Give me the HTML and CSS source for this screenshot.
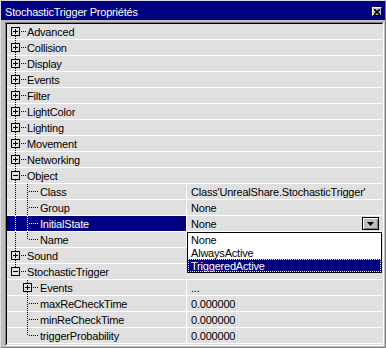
FILE: index.html
```html
<!DOCTYPE html>
<html lang="fr">
<head>
    <meta charset="UTF-8">
    <meta name="viewport" content="width=device-width, initial-scale=1.0">
    <title>StochasticTrigger Propriétés</title>
    <link rel="stylesheet" href="styles.css">
</head>
<body>
    <div class="window">
        <div class="titlebar">
            <span class="caption">StochasticTrigger Propriétés</span>
            <span class="close">
                <svg width="6" height="6" viewBox="0 0 6 6"><path d="M0 0L6 6M6 0L0 6" stroke="#000" stroke-width="1.6"/></svg>
            </span>
        </div>

        <div class="frame">
            <div class="rows">
                <!-- categories -->
                <div class="row">
                    <svg class="tree" width="20" height="16"><path class="dot" d="M8.5 12V16M14 7.5H19"/><rect class="box" x="4.5" y="3.5" width="8" height="8"/><path class="sign" d="M6 7.5H11M8.5 5V10"/></svg>
                    <span class="label">Advanced</span>
                </div>
                <div class="row">
                    <svg class="tree" width="20" height="16"><path class="dot" d="M8.5 0V3M8.5 12V16M14 7.5H19"/><rect class="box" x="4.5" y="3.5" width="8" height="8"/><path class="sign" d="M6 7.5H11M8.5 5V10"/></svg>
                    <span class="label">Collision</span>
                </div>
                <div class="row">
                    <svg class="tree" width="20" height="16"><path class="dot" d="M8.5 0V3M8.5 12V16M14 7.5H19"/><rect class="box" x="4.5" y="3.5" width="8" height="8"/><path class="sign" d="M6 7.5H11M8.5 5V10"/></svg>
                    <span class="label">Display</span>
                </div>
                <div class="row">
                    <svg class="tree" width="20" height="16"><path class="dot" d="M8.5 0V3M8.5 12V16M14 7.5H19"/><rect class="box" x="4.5" y="3.5" width="8" height="8"/><path class="sign" d="M6 7.5H11M8.5 5V10"/></svg>
                    <span class="label">Events</span>
                </div>
                <div class="row">
                    <svg class="tree" width="20" height="16"><path class="dot" d="M8.5 0V3M8.5 12V16M14 7.5H19"/><rect class="box" x="4.5" y="3.5" width="8" height="8"/><path class="sign" d="M6 7.5H11M8.5 5V10"/></svg>
                    <span class="label">Filter</span>
                </div>
                <div class="row">
                    <svg class="tree" width="20" height="16"><path class="dot" d="M8.5 0V3M8.5 12V16M14 7.5H19"/><rect class="box" x="4.5" y="3.5" width="8" height="8"/><path class="sign" d="M6 7.5H11M8.5 5V10"/></svg>
                    <span class="label">LightColor</span>
                </div>
                <div class="row">
                    <svg class="tree" width="20" height="16"><path class="dot" d="M8.5 0V3M8.5 12V16M14 7.5H19"/><rect class="box" x="4.5" y="3.5" width="8" height="8"/><path class="sign" d="M6 7.5H11M8.5 5V10"/></svg>
                    <span class="label">Lighting</span>
                </div>
                <div class="row">
                    <svg class="tree" width="20" height="16"><path class="dot" d="M8.5 0V3M8.5 12V16M14 7.5H19"/><rect class="box" x="4.5" y="3.5" width="8" height="8"/><path class="sign" d="M6 7.5H11M8.5 5V10"/></svg>
                    <span class="label">Movement</span>
                </div>
                <div class="row">
                    <svg class="tree" width="20" height="16"><path class="dot" d="M8.5 0V3M8.5 12V16M14 7.5H19"/><rect class="box" x="4.5" y="3.5" width="8" height="8"/><path class="sign" d="M6 7.5H11M8.5 5V10"/></svg>
                    <span class="label">Networking</span>
                </div>
                <div class="row">
                    <svg class="tree" width="20" height="16"><path class="dot" d="M8.5 0V3M8.5 12V16M14 7.5H19"/><rect class="box" x="4.5" y="3.5" width="8" height="8"/><path class="sign" d="M6 7.5H11"/></svg>
                    <span class="label">Object</span>
                </div>

                <!-- Object properties -->
                <div class="row">
                    <span class="name">
                        <svg class="tree" width="33" height="16"><path class="dot" d="M8.5 0V16M20.5 0V16M22 7.5H32"/></svg>
                        <span class="label">Class</span>
                    </span>
                    <span class="value">Class'UnrealShare.StochasticTrigger'</span>
                </div>
                <div class="row">
                    <span class="name">
                        <svg class="tree" width="33" height="16"><path class="dot" d="M8.5 0V16M20.5 0V16M22 7.5H32"/></svg>
                        <span class="label">Group</span>
                    </span>
                    <span class="value">None</span>
                </div>
                <div class="row">
                    <span class="name selected">
                        <svg class="tree" width="33" height="16"><path class="dot" d="M8.5 0V16M20.5 0V16M22 7.5H32"/></svg>
                        <span class="label">InitialState</span>
                    </span>
                    <span class="value">
                        None
                        <span class="combo-btn">
                            <svg width="7" height="4" viewBox="0 0 7 4"><path d="M0 0H7L3.5 4Z" fill="#000"/></svg>
                        </span>
                        <div class="dropdown">
                            <div class="option">None</div>
                            <div class="option">AlwaysActive</div>
                            <div class="option active">TriggeredActive</div>
                        </div>
                    </span>
                </div>
                <div class="row">
                    <span class="name">
                        <svg class="tree" width="33" height="16"><path class="dot" d="M8.5 0V16M20.5 0V8M22 7.5H32"/></svg>
                        <span class="label">Name</span>
                    </span>
                    <span class="value"></span>
                </div>

                <div class="row">
                    <svg class="tree" width="20" height="16"><path class="dot" d="M8.5 0V3M8.5 12V16M14 7.5H19"/><rect class="box" x="4.5" y="3.5" width="8" height="8"/><path class="sign" d="M6 7.5H11M8.5 5V10"/></svg>
                    <span class="label">Sound</span>
                </div>
                <div class="row">
                    <svg class="tree" width="20" height="16"><path class="dot" d="M8.5 0V3M14 7.5H19"/><rect class="box" x="4.5" y="3.5" width="8" height="8"/><path class="sign" d="M6 7.5H11"/></svg>
                    <span class="label">StochasticTrigger</span>
                </div>

                <!-- StochasticTrigger properties -->
                <div class="row">
                    <span class="name">
                        <svg class="tree" width="33" height="16"><path class="dot" d="M20.5 0V3M20.5 12V16M26 7.5H32"/><rect class="box" x="16.5" y="3.5" width="8" height="8"/><path class="sign" d="M18 7.5H23M20.5 5V10"/></svg>
                        <span class="label">Events</span>
                    </span>
                    <span class="value">...</span>
                </div>
                <div class="row">
                    <span class="name">
                        <svg class="tree" width="33" height="16"><path class="dot" d="M20.5 0V16M22 7.5H32"/></svg>
                        <span class="label">maxReCheckTime</span>
                    </span>
                    <span class="value">0.000000</span>
                </div>
                <div class="row">
                    <span class="name">
                        <svg class="tree" width="33" height="16"><path class="dot" d="M20.5 0V16M22 7.5H32"/></svg>
                        <span class="label">minReCheckTime</span>
                    </span>
                    <span class="value">0.000000</span>
                </div>
                <div class="row">
                    <span class="name">
                        <svg class="tree" width="33" height="16"><path class="dot" d="M20.5 0V8M22 7.5H32"/></svg>
                        <span class="label">triggerProbability</span>
                    </span>
                    <span class="value">0.000000</span>
                </div>
            </div>
        </div>
    </div>
</body>
</html>
```

FILE: styles.css
```css
body {
    margin: 0;
    font-family: 'Liberation Sans', Arial, sans-serif;
    font-size: 11px;
    letter-spacing: -0.2px;
    color: #000;
    background: #c0c0c0;
}
.window {
    width: 386px;
    height: 348px;
    box-sizing: border-box;
    border: 1px solid;
    border-color: #dfdfdf #808080 #808080 #dfdfdf;
    background: #c0c0c0;
    overflow: hidden;
}
.titlebar {
    height: 19px;
    background: #000080;
    color: #fff;
    display: flex;
    justify-content: space-between;
    align-items: flex-start;
    padding: 0 3px 0 4px;
}
.caption {
    line-height: 15px;
    margin-top: 4px;
    white-space: nowrap;
}
.close {
    width: 10px;
    height: 9px;
    margin-top: 6px;
    box-sizing: border-box;
    background: #c0c0c0;
    border: 1px solid;
    border-color: #fff #000 #000 #fff;
    display: flex;
    align-items: center;
    justify-content: center;
}
.close svg {
    display: block;
}
.frame {
    margin: 2px 1px 1px 4px;
    border: 1px solid;
    border-color: #808080 #fff #fff #808080;
}
.rows {
    border: 1px solid;
    border-color: #000 #dfdfdf #dfdfdf #000;
    height: 320px;
    overflow: visible;
}
.row {
    display: flex;
    height: 15px;
    line-height: 16px;
    background: #e0e0e0;
    border-bottom: 1px solid #fff;
    white-space: nowrap;
}
.tree {
    display: block;
    flex-shrink: 0;
    height: 16px;
    color: #000;
    shape-rendering: crispEdges;
}
.tree .dot {
    fill: none;
    stroke: currentColor;
    stroke-dasharray: 1 1;
}
.tree .box {
    fill: none;
    stroke: #000;
}
.tree .sign {
    fill: none;
    stroke: #000;
}
.name {
    width: 179px;
    display: flex;
    flex-shrink: 0;
}
.name.selected {
    background: #000080;
    color: #fff;
}
.name.selected .tree {
    color: #fff;
}
.value {
    position: relative;
    flex: 1;
    padding-left: 4px;
    border-left: 1px solid #fff;
}
.combo-btn {
    position: absolute;
    right: 3px;
    top: 1px;
    width: 17px;
    height: 13px;
    box-sizing: border-box;
    background: #c0c0c0;
    border: 1px solid #000;
    box-shadow: inset 1px 1px #fff, inset -1px -1px #808080;
    display: flex;
    align-items: center;
    justify-content: center;
}
.combo-btn svg {
    display: block;
}
.dropdown {
    position: absolute;
    left: 0;
    top: 16px;
    width: 195px;
    box-sizing: border-box;
    background: #fff;
    border: 1px solid #000;
    z-index: 2;
}
.option {
    height: 13px;
    line-height: 14px;
    padding-left: 3px;
    color: #000;
}
.option.active {
    background: #000080;
    color: #fff;
    outline: 1px dotted #ffff80;
    outline-offset: -1px;
}
```
